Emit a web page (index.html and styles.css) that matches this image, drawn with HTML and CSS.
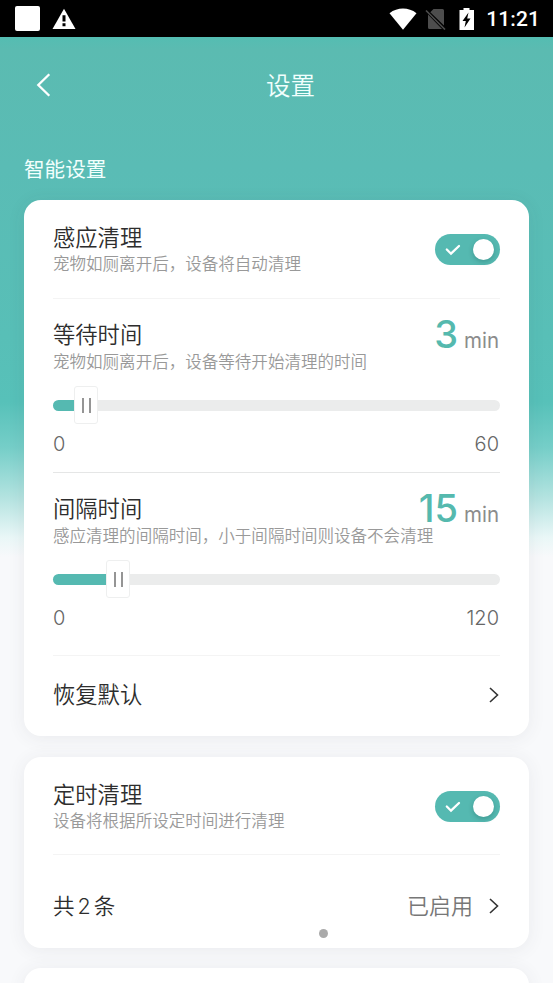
FILE: index.html
```html
<!DOCTYPE html>
<html lang="zh-CN">
<head>
<meta charset="utf-8">
<title>设置</title>
<link rel="stylesheet" href="styles.css">
</head>
<body>
<header class="status">
  <span class="app-square"></span>
  <svg class="warn" width="24" height="22" viewBox="0 0 24 22"><path d="M12 .8 23.5 21H.5z" fill="#fff"/><path d="M10.5 7.3h3v6.2h-3zM10.5 15.2h3v3h-3z" fill="#000"/></svg>
  <svg class="wifi" width="28" height="22" viewBox="0 0 28 22"><path d="M.5 5.2C8.500-1 19.500-1 27.500 5.200L14 21.800z" fill="#fff"/></svg>
  <svg class="sim" width="22" height="22" viewBox="0 0 22 22"><path d="M8.500 1h9Q19 1 19 2.500V17.500L5.300 4.200zM3 6.500 17 21H4.500Q3 21 3 19.500z" fill="#4d4d4d"/><path d="M1 2.500l19 19" stroke="#4d4d4d" stroke-width="1.600"/></svg>
  <svg class="battery" width="16" height="24" viewBox="0 0 16 24"><path d="M4.500 1h6v2H15v20H.500V3h4z" fill="#fff"/><path d="M9.500 5.500 3.500 14h3.300L5.500 20.500l6-9H8.200z" fill="#000"/></svg>
  <span class="clock">11:21</span>
</header>
<main class="page">
  <nav class="nav">
    <svg class="back" width="18" height="26" viewBox="0 0 18 26"><path d="M14.300 2.300 3.300 13l11 10.700" fill="none" stroke="#fff" stroke-width="2.300"/></svg>
    <h1>设置</h1>
  </nav>
  <h2 class="section">智能设置</h2>

  <section class="card">
    <div class="row row-switch">
      <div><div class="title">感应清理</div><div class="desc">宠物如厕离开后，设备将自动清理</div></div>
      <span class="switch"><svg width="16" height="12" viewBox="0 0 16 12"><path d="M1.800 5.500 6 9.700 14 2" fill="none" stroke="#fff" stroke-width="2.300" stroke-linecap="round"/></svg><i></i></span>
    </div>
    <div class="row row-slider wait">
      <div class="head"><div class="title">等待时间</div><div class="value"><b>3</b>min</div></div>
      <div class="desc">宠物如厕离开后，设备等待开始清理的时间</div>
      <div class="slider"><span class="fill" style="width:21px"></span><span class="thumb"></span><span class="rest"></span></div>
      <div class="range"><span>0</span><span>60</span></div>
    </div>
    <div class="row row-slider interval">
      <div class="head"><div class="title">间隔时间</div><div class="value"><b>15</b>min</div></div>
      <div class="desc">感应清理的间隔时间，小于间隔时间则设备不会清理</div>
      <div class="slider"><span class="fill" style="width:53px"></span><span class="thumb"></span><span class="rest"></span></div>
      <div class="range"><span>0</span><span>120</span></div>
    </div>
    <div class="row row-link reset">
      <div class="title">恢复默认</div>
      <svg class="chevron" width="12" height="18" viewBox="0 0 12 18"><path d="M2 2l7.500 7L2 16" fill="none" stroke="#333" stroke-width="1.600"/></svg>
    </div>
  </section>

  <section class="card">
    <div class="row row-switch timed">
      <div><div class="title">定时清理</div><div class="desc">设备将根据所设定时间进行清理</div></div>
      <span class="switch"><svg width="16" height="12" viewBox="0 0 16 12"><path d="M1.800 5.500 6 9.700 14 2" fill="none" stroke="#fff" stroke-width="2.300" stroke-linecap="round"/></svg><i></i></span>
    </div>
    <div class="row row-link count">
      <div class="title">共<span class="num">2</span>条</div>
      <div class="state">已启用</div>
      <svg class="chevron" width="12" height="18" viewBox="0 0 12 18"><path d="M2 2l7.500 7L2 16" fill="none" stroke="#333" stroke-width="1.600"/></svg>
    </div>
    <span class="touch"></span>
  </section>

  <section class="card next"></section>
</main>
</body>
</html>
```
FILE: styles.css
```css
* { box-sizing: border-box; }
body {
  margin: 0;
  height: 983px;
  overflow: hidden;
  font-family: Inter, "Noto Sans CJK SC", sans-serif;
  color: #2d2d2d;
}
svg { display: block; flex: none; }
h1, h2 { margin: 0; font-weight: 350; color: #f2fffd; }

.status {
  display: flex;
  align-items: center;
  height: 37px;
  padding: 0 13px 0 15px;
  background: #000;
}
.app-square { width: 25px; height: 25px; border-radius: 2px; background: #fff; }
.warn { margin-left: 12px; }
.wifi { margin-left: auto; }
.sim { margin-left: 8px; }
.battery { margin-left: 12px; }
.clock {
  margin-left: 11px;
  font: 500 21px/37px Roboto, sans-serif;
  letter-spacing: 0.1px;
  padding-top: 1px;
  color: #fff;
}

.page {
  height: 946px;
  overflow: hidden;
  padding: 0 24px;
  background: linear-gradient(#54bdb2 0, #5bbbb1 12px, #5abcb5 130px, #58bfb7 300px, #57c1b9 365px, #75cec8 410px, #b3e3e0 460px, #e9f7f7 500px, #f8f9fb 520px);
}
.nav {
  display: grid;
  grid-template-columns: 242px auto 1fr;
  align-items: center;
  height: 95px;
}
.back { margin-left: 11px; }
.nav h1 { padding-top: 3px; font-size: 24.500px; line-height: 36px; }
.section {
  height: 68px;
  padding-top: 24px;
  font-size: 20.600px;
  font-weight: 400;
  line-height: 28px;
}

.card {
  position: relative;
  margin-bottom: 21px;
  padding: 0 29px;
  border-radius: 17px;
  background: #fff;
  box-shadow: 0 2px 18px rgba(60, 70, 80, 0.08);
}
.row + .row { border-top: 1px solid #f4f4f4; }
.title { font-size: 22.300px; line-height: 28px; white-space: nowrap; font-weight: 350; }
.desc { font-size: 16.540px; line-height: 22px; color: #999; white-space: nowrap; font-weight: 350; }

.row-switch {
  display: flex;
  justify-content: space-between;
  height: 98px;
  padding-top: 24px;
}
.row-switch.timed { height: 97px; }
.row-switch .desc { margin-top: 1px; }
.switch {
  display: flex;
  align-items: center;
  justify-content: space-between;
  width: 65px;
  height: 31px;
  margin-top: 10px;
  padding: 0 6px 0 10px;
  border-radius: 16px;
  background: #55b9b1;
}
.switch i {
  width: 21px;
  height: 21px;
  border-radius: 50%;
  background: #fff;
  box-shadow: 0 2px 5px rgba(0, 60, 55, 0.25);
}

.row-slider { height: 174px; padding-top: 22px; }
.row + .row-slider.interval { height: 183px; border-top-color: #e5e6e6; }
.head { display: flex; justify-content: space-between; height: 28px; }
.row-slider .desc { margin-top: 2px; }
.value {
  display: flex;
  align-items: baseline;
  height: 28px;
  margin: -1px 1px 0 0;
  line-height: 28px;
  font-size: 20.500px;
  color: #8c8c8c;
}
.value b { margin-right: 6px; font-size: 38px; font-weight: 500; color: #55b9ae; }
.slider { display: flex; align-items: center; height: 38px; margin-top: 13px; }
.fill { height: 11px; border-radius: 6px 0 0 6px; background: #55b9b1; }
.rest { flex: 1; height: 11px; border-radius: 0 6px 6px 0; background: #ebecec; }
.thumb {
  display: flex;
  align-items: center;
  justify-content: center;
  gap: 5px;
  width: 24px;
  height: 38px;
  border: 1px solid #eeefef;
  border-radius: 3px;
  background: #fff;
}
.thumb::before, .thumb::after { content: ""; width: 2px; height: 15px; background: #959595; }
.range {
  display: flex;
  justify-content: space-between;
  margin-top: 7px;
  padding: 0 1px 0 0;
  font-size: 20px;
  line-height: 26px;
  color: #666;
  font-weight: 350;
}

.row-link { display: flex; align-items: center; height: 81px; }
.row-link .title { margin-right: auto; }
.row-link.reset { padding-bottom: 3px; }
.row-link.count { height: 94px; padding-top: 8px; }
.count .title { font-size: 21.500px; }
.num { margin: 0 3px; }
.state { margin-right: 15px; font-size: 22px; line-height: 28px; color: #777; font-weight: 350; }
.touch {
  position: absolute;
  left: 295px;
  top: 172px;
  width: 9px;
  height: 9px;
  border-radius: 50%;
  background: #aaa;
}
.card + .card { margin-bottom: 20px; }
.next { height: 100px; }
```
